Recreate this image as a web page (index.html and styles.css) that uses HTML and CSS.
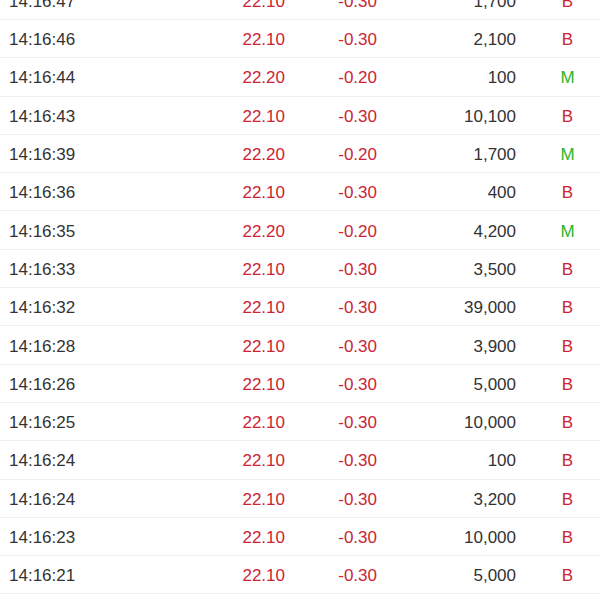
FILE: index.html
```html
<!DOCTYPE html>
<html>
<head>
<meta charset="utf-8">
<link rel="stylesheet" href="styles.css">
</head>
<body>
<div class="trades">
  <div class="row"><span class="time">14:16:47</span><span class="price down">22.10</span><span class="chg down">-0.30</span><span class="vol">1,700</span><span class="side buy">B</span></div>
  <div class="row"><span class="time">14:16:46</span><span class="price down">22.10</span><span class="chg down">-0.30</span><span class="vol">2,100</span><span class="side buy">B</span></div>
  <div class="row"><span class="time">14:16:44</span><span class="price down">22.20</span><span class="chg down">-0.20</span><span class="vol">100</span><span class="side sell">M</span></div>
  <div class="row"><span class="time">14:16:43</span><span class="price down">22.10</span><span class="chg down">-0.30</span><span class="vol">10,100</span><span class="side buy">B</span></div>
  <div class="row"><span class="time">14:16:39</span><span class="price down">22.20</span><span class="chg down">-0.20</span><span class="vol">1,700</span><span class="side sell">M</span></div>
  <div class="row"><span class="time">14:16:36</span><span class="price down">22.10</span><span class="chg down">-0.30</span><span class="vol">400</span><span class="side buy">B</span></div>
  <div class="row"><span class="time">14:16:35</span><span class="price down">22.20</span><span class="chg down">-0.20</span><span class="vol">4,200</span><span class="side sell">M</span></div>
  <div class="row"><span class="time">14:16:33</span><span class="price down">22.10</span><span class="chg down">-0.30</span><span class="vol">3,500</span><span class="side buy">B</span></div>
  <div class="row"><span class="time">14:16:32</span><span class="price down">22.10</span><span class="chg down">-0.30</span><span class="vol">39,000</span><span class="side buy">B</span></div>
  <div class="row"><span class="time">14:16:28</span><span class="price down">22.10</span><span class="chg down">-0.30</span><span class="vol">3,900</span><span class="side buy">B</span></div>
  <div class="row"><span class="time">14:16:26</span><span class="price down">22.10</span><span class="chg down">-0.30</span><span class="vol">5,000</span><span class="side buy">B</span></div>
  <div class="row"><span class="time">14:16:25</span><span class="price down">22.10</span><span class="chg down">-0.30</span><span class="vol">10,000</span><span class="side buy">B</span></div>
  <div class="row"><span class="time">14:16:24</span><span class="price down">22.10</span><span class="chg down">-0.30</span><span class="vol">100</span><span class="side buy">B</span></div>
  <div class="row"><span class="time">14:16:24</span><span class="price down">22.10</span><span class="chg down">-0.30</span><span class="vol">3,200</span><span class="side buy">B</span></div>
  <div class="row"><span class="time">14:16:23</span><span class="price down">22.10</span><span class="chg down">-0.30</span><span class="vol">10,000</span><span class="side buy">B</span></div>
  <div class="row"><span class="time">14:16:21</span><span class="price down">22.10</span><span class="chg down">-0.30</span><span class="vol">5,000</span><span class="side buy">B</span></div>
</div>
</body>
</html>
```
FILE: styles.css
```css
html, body {
  margin: 0;
  padding: 0;
  background: #ffffff;
  overflow: hidden;
}
body {
  font-family: "Liberation Sans", Arial, sans-serif;
  font-size: 17px;
  color: #333333;
}
.trades {
  margin-top: -18.3px;
}
.row {
  display: grid;
  grid-template-columns: 191px 85px 92px 139px 1fr;
  align-items: center;
  height: 38.3px;
  box-sizing: border-box;
  padding-left: 9px;
  padding-top: 3px;
  border-bottom: 1px solid #efefef;
}
.time { text-align: left; }
.price, .chg, .vol { text-align: right; }
.side {
  text-align: center;
  padding-left: 19px;
}
.down, .buy { color: #cc2433; }
.sell { color: #2cb52c; }
```
